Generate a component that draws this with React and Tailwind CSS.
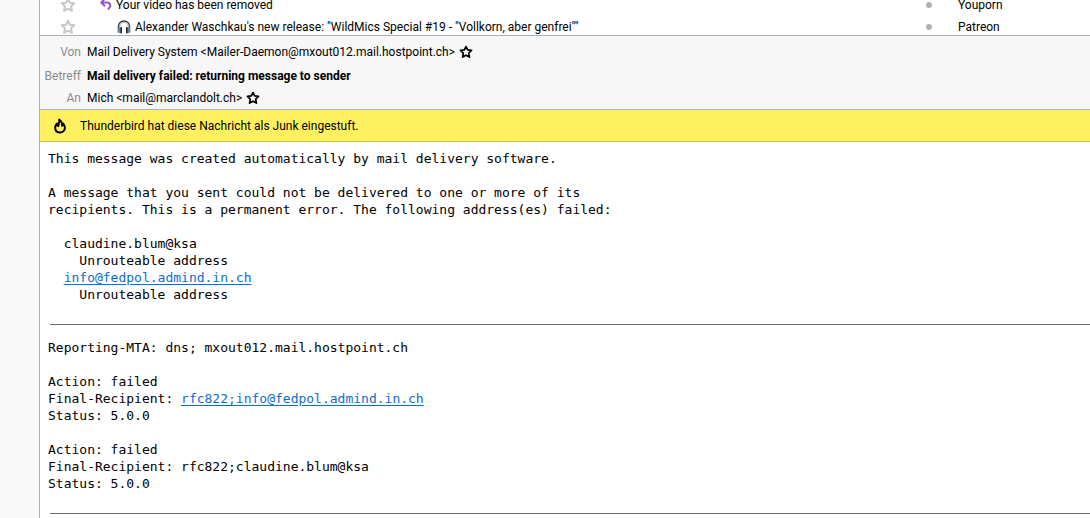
import React from "react";

function Star({ className }) {
  return (
    <svg viewBox="0 0 16 16" className={className} fill="none" stroke="currentColor" strokeWidth="2" strokeLinejoin="round" aria-hidden="true">
      <path d="M8 1.8 9.9 5.7 14.3 6.2 11.1 9.2 11.9 13.8 8 11.7 4.1 13.8 4.9 9.2 1.7 6.2 6.1 5.7Z" />
    </svg>
  );
}

function Reply() {
  return (
    <svg viewBox="0 0 12 12" className="size-3 shrink-0 text-[#9a57cd]" fill="none" stroke="currentColor" strokeWidth="2" aria-hidden="true">
      <path d="M4.500 0 1.200 3.600 5 7.200M1.500 3.600H7C10.800 3.600 11.400 8 7.800 10.300" />
    </svg>
  );
}

function Headphones() {
  return (
    <svg viewBox="0 0 14 14" className="size-3.5 shrink-0" fill="none" aria-hidden="true">
      <path d="M1.500 9V6.500C1.500 3 4 1 7 1s5.500 2 5.500 5.500V9" stroke="#34373c" strokeWidth="1.400" />
      <path d="M2.900 7V6.300C2.900 3.800 4.800 2.300 7 2.300s4.100 1.500 4.100 4V7" stroke="#aab4be" strokeWidth="1" />
      <rect x="0.600" y="7" width="2.600" height="6" rx="1.200" fill="#6c7f96" />
      <rect x="10.800" y="7" width="2.600" height="6" rx="1.200" fill="#6c7f96" />
      <rect x="3.200" y="7" width="1.800" height="6.500" rx="0.800" fill="#25272b" />
      <rect x="9" y="7" width="1.800" height="6.500" rx="0.800" fill="#25272b" />
    </svg>
  );
}

function Flame() {
  return (
    <svg viewBox="0 0 16 16" className="size-4 shrink-0" fill="none" stroke="currentColor" strokeWidth="2" strokeLinejoin="round" aria-hidden="true">
      <path d="M7.200 1.500C7.800 4.200 6.600 5.500 6.200 8 5.200 7.600 4.800 6.700 4.800 5.600 3.500 7.200 3 8.800 3.200 10.300 3.500 12.800 5.500 14.400 8 14.400c2.900 0 4.900-2 4.900-4.700 0-1.600-.6-2.900-1.700-4.100-.1 1-.4 1.700-1.100 2.200C10.200 5.200 9.300 3 7.200 1.500Z" />
    </svg>
  );
}

function MessageRow({ icon, indent, subject, sender }) {
  return (
    <li className="flex h-[22px] items-center">
      <button type="button" aria-label="Star" className="ml-5 text-[#c8c8c8]">
        <Star className="size-4" />
      </button>
      <div className={`flex min-w-0 flex-1 items-center gap-1 ${indent}`}>
        {icon}
        <span className="truncate">{subject}</span>
      </div>
      <span className="size-1.5 shrink-0 rounded-full bg-[#b1b1b1]" />
      <span className="ml-[26px] w-[132px] shrink-0">{sender}</span>
    </li>
  );
}

function Field({ label, size = "h-[22px]", children }) {
  return (
    <div className={`flex items-center ${size}`}>
      <dt className="mr-1.5 w-[41px] shrink-0 text-right text-[#8b8b8b]">{label}</dt>
      <dd className="flex items-center gap-1">{children}</dd>
    </div>
  );
}

const link = "text-[#0a6cd6] underline underline-offset-2";

export default function App() {
  return (
    <div className="flex min-h-screen bg-white font-[Roboto,'Open_Sans',sans-serif] text-[12px] leading-4 text-black">
      <aside className="w-10 shrink-0 border-r border-[#a9b1bd] bg-[#f9f9fa]" />
      <main className="min-w-0 flex-1">
        <div className="h-9 overflow-hidden border-b border-[#a9b1c6]">
          <ul className="-mt-1.5">
            <MessageRow icon={<Reply />} indent="ml-6" subject="Your video has been removed" sender="Youporn" />
            <MessageRow
              icon={<Headphones />}
              indent="ml-[41px]"
              subject={'Alexander Waschkau\'s new release: "WildMics Special #19 - "Vollkorn, aber genfrei""'}
              sender="Patreon"
            />
          </ul>
        </div>
        <dl className="border-b border-[#a9b1c6] bg-[#f7f7f7] pt-[5px]">
          <Field label="Von">
            <span>Mail Delivery System &lt;Mailer-Daemon@mxout012.mail.hostpoint.ch&gt;</span>
            <button type="button" aria-label="Star sender"><Star className="size-3.5" /></button>
          </Field>
          <Field label="Betreff" size="h-6 pt-0.5">
            <span className="font-bold">Mail delivery failed: returning message to sender</span>
          </Field>
          <Field label="An">
            <span>Mich &lt;mail@marclandolt.ch&gt;</span>
            <button type="button" aria-label="Star recipient"><Star className="size-3.5" /></button>
          </Field>
        </dl>
        <div className="flex h-8 items-center gap-3 border-b border-[#c9bf50] bg-[#fff060] pl-3">
          <Flame />
          <p>Thunderbird hat diese Nachricht als Junk eingestuft.</p>
        </div>
        <article className="pt-2 pl-2 font-['DejaVu_Sans_Mono','Liberation_Mono',monospace] text-[13px] leading-[17px]">
          <pre className="font-[inherit]">
            {"This message was created automatically by mail delivery software.\n\nA message that you sent could not be delivered to one or more of its\nrecipients. This is a permanent error. The following address(es) failed:\n\n  claudine.blum@ksa\n    Unrouteable address\n  "}
            <a href="mailto:info@fedpol.admind.in.ch" className={link}>info@fedpol.admind.in.ch</a>
            {"\n    Unrouteable address"}
          </pre>
          <hr className="mt-[21px] mb-3.5 ml-0.5 border-[#6a6a6a]" />
          <pre className="font-[inherit]">
            {"Reporting-MTA: dns; mxout012.mail.hostpoint.ch\n\nAction: failed\nFinal-Recipient: "}
            <a href="mailto:rfc822;info@fedpol.admind.in.ch" className={link}>rfc822;info@fedpol.admind.in.ch</a>
            {"\nStatus: 5.0.0\n\nAction: failed\nFinal-Recipient: rfc822;claudine.blum@ksa\nStatus: 5.0.0"}
          </pre>
          <hr className="mt-[21px] ml-0.5 border-[#6a6a6a]" />
        </article>
      </main>
    </div>
  );
}
